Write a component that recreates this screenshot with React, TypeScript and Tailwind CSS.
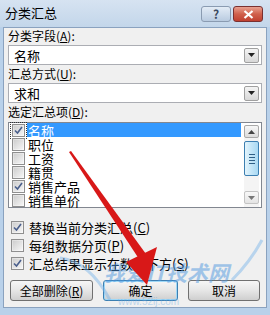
import React from "react";

const font = { fontFamily: '"Noto Sans CJK SC", "Noto Sans", sans-serif' };

function Check({ checked, focus }: { checked?: boolean; focus?: boolean }) {
  return (
    <div className={"flex h-[15px] w-[15px] items-center justify-center " + (focus ? "outline outline-1 outline-dotted outline-[#333]" : "")}>
      <div className="flex h-[13px] w-[13px] items-center justify-center border border-[#8f8f8f] bg-gradient-to-br from-[#dcdcdc] to-[#fbfbfb]">
        <div className="flex h-[9px] w-[9px] items-center justify-center bg-gradient-to-br from-[#cfcfcf] to-[#f4f4f4]">
          {checked && (
            <svg width="9" height="9" viewBox="0 0 9 9">
              <path d="M1 4.5 L3.5 7 L8 1" stroke="#4a5f8c" strokeWidth="1.6" fill="none" />
            </svg>
          )}
        </div>
      </div>
    </div>
  );
}

function Combo({ value }: { value: string }) {
  return (
    <div className="flex h-[20px] items-center border border-[#abadb3] bg-white">
      <div className="flex-1 pl-[5px] text-[13px] leading-none text-black">{value}</div>
      <div className="mr-[2px] flex h-[15px] w-[15px] items-center justify-center rounded-[2px] border border-[#a0a0a0] bg-gradient-to-b from-[#f4f4f4] to-[#d8d8d8]">
        <svg width="7" height="4" viewBox="0 0 7 4">
          <path d="M0 0 H7 L3.5 4 Z" fill="#222" />
        </svg>
      </div>
    </div>
  );
}

function Btn({ children, def }: { children: React.ReactNode; def?: boolean }) {
  return (
    <div
      className={
        "flex h-[21px] items-center justify-center rounded-[3px] border bg-gradient-to-b from-[#f6f6f6] via-[#e6e6e6] to-[#cfcfcf] text-[12px] text-black " +
        (def ? "border-[#3c7fb1] shadow-[inset_0_0_0_1px_#9ed8f7]" : "border-[#707070]")
      }
    >
      {children}
    </div>
  );
}

export default function App() {
  const items = [
    { t: "名称", c: true },
    { t: "职位", c: false },
    { t: "工资", c: false },
    { t: "籍贯", c: false },
    { t: "销售产品", c: true },
    { t: "销售单价", c: false },
  ];
  return (
    <div className="relative h-[315px] w-[270px] overflow-hidden bg-[#b9d1ea]" style={font}>
      <div className="flex h-full flex-col">
        {/* title bar */}
        <div className="flex h-[27px] items-start bg-gradient-to-b from-[#d6e3f1] to-[#c3d6ea] pl-[5px] pr-[7px]">
          <div className="mt-[4px] flex-1 text-[13px] leading-[18px] text-black">分类汇总</div>
          <div className="mt-[6px] flex gap-[2px]">
            <div className="flex h-[16px] w-[30px] items-center justify-center rounded-[3px] border border-[#8a9bb1] bg-gradient-to-b from-[#e3ecf6] to-[#b9cbe0] text-[12px] font-bold leading-none text-[#3a4a60]">
              ?
            </div>
            <div className="flex h-[16px] w-[30px] items-center justify-center rounded-[3px] border border-[#7a3030] bg-gradient-to-b from-[#e8a090] via-[#d0604c] to-[#c04030]">
              <svg width="11" height="9" viewBox="0 0 11 9">
                <path d="M1.5 1 L9.5 8 M9.5 1 L1.5 8" stroke="white" strokeWidth="2.2" />
              </svg>
            </div>
          </div>
        </div>
        {/* body */}
        <div className="mx-[3px] flex h-[281px] flex-col border border-[#8aa2bf] bg-[#f0f0f0] px-[4px] text-[12px] text-black">
          <div className="h-[16px] leading-[16px]">分类字段(<u>A</u>):</div>
          <div className="mt-[1px]">
            <Combo value="名称" />
          </div>
          <div className="mt-[1px] h-[16px] leading-[16px]">汇总方式(<u>U</u>):</div>
          <div className="mt-[1px]">
            <Combo value="求和" />
          </div>
          <div className="mt-[1px] h-[16px] leading-[16px]">选定汇总项(<u>D</u>):</div>
          <div className="mt-[2px] flex h-[86px] border border-[#828790] bg-white">
            <div className="flex flex-1 flex-col pl-[2px]">
              {items.map((it, i) => (
                <div key={i} className="flex h-[14px] items-center">
                  <Check checked={it.c} focus={i === 0} />
                  <div
                    className={
                      "ml-[1px] flex h-[14px] flex-1 items-center pl-[1px] text-[13px] leading-none " +
                      (i === 0 ? "bg-[#3399ff] text-white" : "text-black")
                    }
                  >
                    {it.t}
                  </div>
                </div>
              ))}
            </div>
            <div className="ml-[3px] mr-[2px] mt-[2px] flex w-[15px] flex-col bg-[#f4f4f4]">
              <div className="flex h-[13px] items-center justify-center rounded-[2px] border border-[#a9a9a9] bg-gradient-to-b from-[#f8f8f8] to-[#dcdcdc]">
                <svg width="7" height="4" viewBox="0 0 7 4">
                  <path d="M0 4 H7 L3.5 0 Z" fill="#444" />
                </svg>
              </div>
              <div className="mt-[3px] flex h-[35px] items-center justify-center rounded-[2px] border border-[#3c7fb1] bg-gradient-to-r from-[#e3f4fc] via-[#c4e6f8] to-[#a9d9f3]">
                <div className="flex flex-col gap-[2px]">
                  <div className="h-[1px] w-[6px] bg-[#2f5f86]" />
                  <div className="h-[1px] w-[6px] bg-[#2f5f86]" />
                  <div className="h-[1px] w-[6px] bg-[#2f5f86]" />
                  <div className="h-[1px] w-[6px] bg-[#2f5f86]" />
                </div>
              </div>
              <div className="flex-1" />
              <div className="mb-[3px] flex h-[13px] items-center justify-center rounded-[2px] border border-[#c4c4c4] bg-gradient-to-b from-[#f8f8f8] to-[#e4e4e4]">
                <svg width="7" height="4" viewBox="0 0 7 4">
                  <path d="M0 0 H7 L3.5 4 Z" fill="#777" />
                </svg>
              </div>
            </div>
          </div>
          <div className="mt-[12px] flex flex-col gap-[3px] pl-[2px]">
            {[
              { t: "替换当前分类汇总", k: "C", c: true },
              { t: "每组数据分页", k: "P", c: false },
              { t: "汇总结果显示在数据下方", k: "S", c: true },
            ].map((o, i) => (
              <div key={i} className="flex h-[15px] items-center gap-[4px] text-[13px] leading-none">
                <Check checked={o.c} />
                <span>
                  {o.t}(<u>{o.k}</u>)
                </span>
              </div>
            ))}
          </div>
          <div className="mt-[9px] grid grid-cols-[83px_75px_72px] gap-x-[10px] pl-[2px]">
            <Btn>全部删除(<u>R</u>)</Btn>
            <Btn def>确定</Btn>
            <Btn>取消</Btn>
          </div>
        </div>
      </div>

      {/* watermark */}
      <div className="pointer-events-none absolute left-[104px] top-[262px] text-[21px] font-bold italic leading-none text-[#4f98e0] opacity-50">
        我爱IT技术网
      </div>
      <div className="pointer-events-none absolute left-[118px] top-[297px] text-[10px] leading-none text-[#6aaae6] opacity-40" style={{ fontFamily: '"Liberation Sans", sans-serif' }}>
        www.52ij.com
      </div>
      <svg className="pointer-events-none absolute left-0 top-0" width="270" height="315" viewBox="0 0 270 315">
        <path d="M60 258 Q90 262 110 300" stroke="#7fb8ea" strokeWidth="3" fill="none" opacity="0.5" />
        <path d="M232 280 Q250 262 262 240" stroke="#7fb8ea" strokeWidth="3" fill="none" opacity="0.5" />
        <polygon points="69,152 71,151 146,254 139,259" fill="#d81818" />
        <polygon points="126,262 157,247 147,285" fill="#d81818" />
      </svg>
    </div>
  );
}
